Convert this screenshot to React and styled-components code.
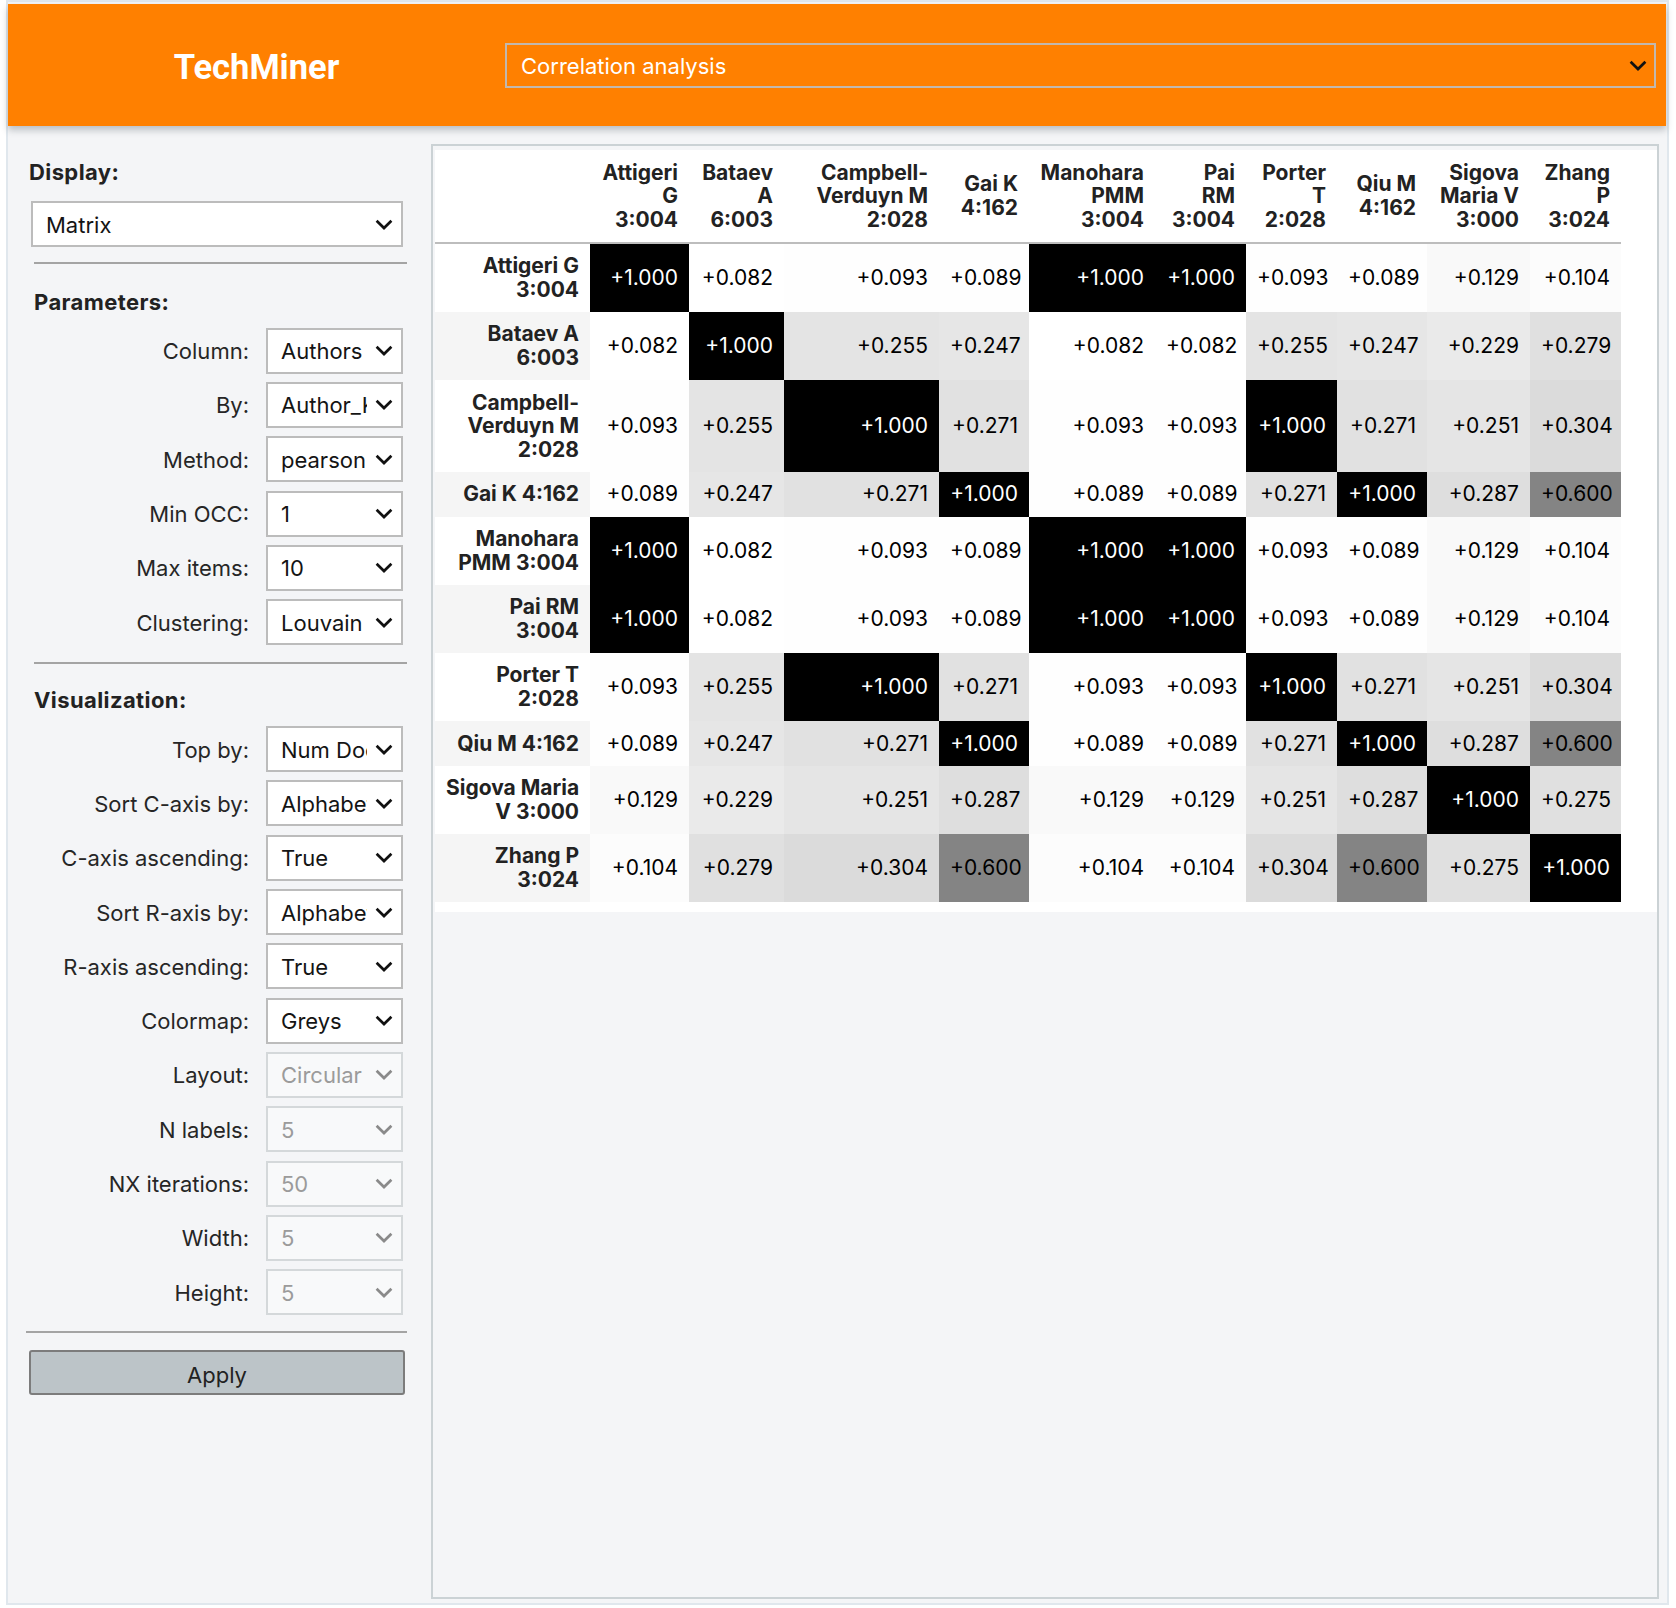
import React from "react";
import styled, { createGlobalStyle } from "styled-components";

const GlobalStyle = createGlobalStyle`
  html, body {
    margin: 0;
    padding: 0;
    background: #ffffff;
  }
  body {
    font-family: Inter, "Noto Sans", "Liberation Sans", sans-serif;
    color: #222;
  }
  * {
    box-sizing: border-box;
  }
`;

const authors = [
  { col: ["Attigeri", "G", "3:004"], row: ["Attigeri G", "3:004"], width: 99 },
  { col: ["Bataev", "A", "6:003"], row: ["Bataev A", "6:003"], width: 95 },
  { col: ["Campbell-", "Verduyn M", "2:028"], row: ["Campbell-", "Verduyn M", "2:028"], width: 155 },
  { col: ["Gai K", "4:162"], row: ["Gai K 4:162"], width: 90 },
  { col: ["Manohara", "PMM", "3:004"], row: ["Manohara", "PMM 3:004"], width: 126 },
  { col: ["Pai", "RM", "3:004"], row: ["Pai RM", "3:004"], width: 91 },
  { col: ["Porter", "T", "2:028"], row: ["Porter T", "2:028"], width: 91 },
  { col: ["Qiu M", "4:162"], row: ["Qiu M 4:162"], width: 90 },
  { col: ["Sigova", "Maria V", "3:000"], row: ["Sigova Maria", "V 3:000"], width: 103 },
  { col: ["Zhang", "P", "3:024"], row: ["Zhang P", "3:024"], width: 91 },
];

const matrix = [
  [1.0, 0.082, 0.093, 0.089, 1.0, 1.0, 0.093, 0.089, 0.129, 0.104],
  [0.082, 1.0, 0.255, 0.247, 0.082, 0.082, 0.255, 0.247, 0.229, 0.279],
  [0.093, 0.255, 1.0, 0.271, 0.093, 0.093, 1.0, 0.271, 0.251, 0.304],
  [0.089, 0.247, 0.271, 1.0, 0.089, 0.089, 0.271, 1.0, 0.287, 0.6],
  [1.0, 0.082, 0.093, 0.089, 1.0, 1.0, 0.093, 0.089, 0.129, 0.104],
  [1.0, 0.082, 0.093, 0.089, 1.0, 1.0, 0.093, 0.089, 0.129, 0.104],
  [0.093, 0.255, 1.0, 0.271, 0.093, 0.093, 1.0, 0.271, 0.251, 0.304],
  [0.089, 0.247, 0.271, 1.0, 0.089, 0.089, 0.271, 1.0, 0.287, 0.6],
  [0.129, 0.229, 0.251, 0.287, 0.129, 0.129, 0.251, 0.287, 1.0, 0.275],
  [0.104, 0.279, 0.304, 0.6, 0.104, 0.104, 0.304, 0.6, 0.275, 1.0],
];

const parameters = [
  ["Column:", "Authors"],
  ["By:", "Author_Keywords"],
  ["Method:", "pearson"],
  ["Min OCC:", "1"],
  ["Max items:", "10"],
  ["Clustering:", "Louvain"],
];

const visualization = [
  ["Top by:", "Num Documents"],
  ["Sort C-axis by:", "Alphabetic"],
  ["C-axis ascending:", "True"],
  ["Sort R-axis by:", "Alphabetic"],
  ["R-axis ascending:", "True"],
  ["Colormap:", "Greys"],
  ["Layout:", "Circular", true],
  ["N labels:", "5", true],
  ["NX iterations:", "50", true],
  ["Width:", "5", true],
  ["Height:", "5", true],
];

// matplotlib Greys, scaled over the whole table
const greys = [255, 240, 217, 189, 150, 115, 82, 37, 0];
function greyLevel(v) {
  const t = Math.min(1, Math.max(0, (v - 0.082) / (1 - 0.082)));
  const x = t * 8;
  const i = Math.min(7, Math.floor(x));
  const f = x - i;
  return Math.round(greys[i] + (greys[i + 1] - greys[i]) * f);
}

function Chevron({ color = "#111" }) {
  return (
    <ChevronIcon viewBox="0 0 18 11" fill="none">
      <path d="M1.6 1.8 L9 9 L16.4 1.8" stroke={color} strokeWidth="2.7" strokeLinejoin="miter" />
    </ChevronIcon>
  );
}

function Dropdown({ value, disabled }) {
  return (
    <SelectBox $disabled={disabled}>
      <SelectValue>{value}</SelectValue>
      <Chevron color={disabled ? "#8a8a8a" : "#111"} />
    </SelectBox>
  );
}

function Lines({ items }) {
  return items.map((t, i) => (
    <React.Fragment key={i}>
      {i > 0 && <br />}
      {t}
    </React.Fragment>
  ));
}

function App() {
  return (
    <>
      <GlobalStyle />
      <Frame>
        <Header>
          <Brand>TechMiner</Brand>
          <ModeSelect>
            <ModeValue>Correlation analysis</ModeValue>
            <Chevron color="#111" />
          </ModeSelect>
        </Header>
        <Body>
          <Sidebar>
            <SectionTitle $top={0} $left={0}>Display:</SectionTitle>
            <DisplayWrap>
              <Dropdown value="Matrix" />
            </DisplayWrap>
            <Rule />
            <SectionTitle>Parameters:</SectionTitle>
            <Rows>
              {parameters.map(([label, value]) => (
                <FieldRow key={label}>
                  <FieldLabel>{label}</FieldLabel>
                  <Dropdown value={value} />
                </FieldRow>
              ))}
            </Rows>
            <Rule $top={17} />
            <SectionTitle $top={23}>Visualization:</SectionTitle>
            <Rows>
              {visualization.map(([label, value, disabled]) => (
                <FieldRow key={label}>
                  <FieldLabel>{label}</FieldLabel>
                  <Dropdown value={value} disabled={disabled} />
                </FieldRow>
              ))}
            </Rows>
            <Rule $top={15.5} $left={-3} />
            <ApplyButton type="button">Apply</ApplyButton>
          </Sidebar>
          <Main>
            <Output>
              <Grid>
                <colgroup>
                  <col style={{ width: 155 }} />
                  {authors.map((a) => (
                    <col key={a.row.join()} style={{ width: a.width }} />
                  ))}
                </colgroup>
                <thead>
                  <tr>
                    <HeadCell />
                    {authors.map((a) => (
                      <HeadCell key={a.col.join()}>
                        <Lines items={a.col} />
                      </HeadCell>
                    ))}
                  </tr>
                </thead>
                <tbody>
                  {authors.map((a, r) => (
                    <tr key={a.row.join()}>
                      <RowHead $striped={r % 2 === 1}>
                        <Lines items={a.row} />
                      </RowHead>
                      {matrix[r].map((v, c) => {
                        const g = greyLevel(v);
                        return (
                          <ValueCell
                            key={c}
                            style={{
                              background: `rgb(${g},${g},${g})`,
                              color: g < 70 ? "#ffffff" : "#000000",
                            }}
                          >
                            +{v.toFixed(3)}
                          </ValueCell>
                        );
                      })}
                    </tr>
                  ))}
                </tbody>
              </Grid>
            </Output>
          </Main>
        </Body>
      </Frame>
    </>
  );
}

const Frame = styled.div`
  margin-left: 6px;
  width: 1663px;
  height: 1605px;
  border: 2px solid #e0e7ed;
  padding-top: 2px;
  background: #f4f5f7;
  display: flex;
  flex-direction: column;
`;

const Header = styled.header`
  position: relative;
  z-index: 1;
  flex-shrink: 0;
  height: 122px;
  margin-right: 1px;
  padding-right: 10px;
  background: #ff8000;
  display: flex;
  align-items: center;
  box-shadow: 0 4px 7px rgba(40, 50, 60, 0.28);
`;

const Brand = styled.div`
  width: 497px;
  flex-shrink: 0;
  text-align: center;
  font-family: Roboto, "Liberation Sans", sans-serif;
  font-weight: 700;
  font-size: 34.5px;
  color: #ffffff;
  padding-top: 3px;
`;

const ModeSelect = styled.div`
  flex: 1;
  height: 45px;
  border: 2px solid #c2b8ae;
  display: flex;
  align-items: center;
  padding: 0 7px 0 14px;
`;

const ModeValue = styled.span`
  flex: 1;
  color: #ffffff;
  font-size: 22px;
  padding-top: 2px;
`;

const ChevronIcon = styled.svg`
  width: 18px;
  height: 11px;
  flex-shrink: 0;
`;

const Body = styled.div`
  flex: 1;
  min-height: 0;
  display: flex;
`;

const Sidebar = styled.aside`
  width: 423px;
  flex-shrink: 0;
  padding: 33px 24px 0 21px;
  display: flex;
  flex-direction: column;
`;

const DisplayWrap = styled.div`
  margin: 16px 4px 0 2px;
`;

const SectionTitle = styled.div`
  margin: ${(p) => p.$top ?? 24.7}px 0 0 ${(p) => p.$left ?? 5}px;
  font-size: 22px;
  font-weight: 700;
  letter-spacing: 0.4px;
  line-height: 26px;
  color: #222;
`;

const Rule = styled.div`
  margin: ${(p) => p.$top ?? 15}px 0 0 ${(p) => p.$left ?? 5}px;
  height: 2px;
  background: #a4a4a4;
`;

const Rows = styled.div`
  margin-top: 13px;
  display: flex;
  flex-direction: column;
  gap: 8.3px;
`;

const FieldRow = styled.div`
  display: grid;
  grid-template-columns: 220px 137px;
  column-gap: 17px;
  align-items: center;
`;

const FieldLabel = styled.span`
  text-align: right;
  font-size: 22px;
  color: #262626;
  white-space: nowrap;
  padding-top: 1px;
`;

const SelectBox = styled.div`
  height: 46px;
  border: 2px solid ${(p) => (p.$disabled ? "#d4d8da" : "#bcbcbc")};
  background: ${(p) => (p.$disabled ? "#f8f9fa" : "#ffffff")};
  color: ${(p) => (p.$disabled ? "#9b9b9b" : "#141414")};
  display: flex;
  align-items: center;
  padding: 0 8px 0 13px;
  font-size: 22px;
`;

const SelectValue = styled.span`
  flex: 1;
  min-width: 0;
  margin-right: 8px;
  padding-top: 1px;
  overflow: hidden;
  white-space: nowrap;
`;

const ApplyButton = styled.button`
  margin-top: 17.5px;
  width: 376px;
  height: 45px;
  background: #bcc4c8;
  border: 2px solid #7c7c7c;
  border-radius: 3px;
  font-family: Inter, "Noto Sans", "Liberation Sans", sans-serif;
  font-size: 22px;
  color: #222;
  padding-top: 6px;
`;

const Main = styled.main`
  flex: 1;
  min-width: 0;
  margin: 18px 8px 4px 0;
  border: 2px solid #cbd2d5;
  padding: 4px 0 0 2px;
`;

const Output = styled.div`
  background: #ffffff;
  padding-bottom: 10px;
`;

const Grid = styled.table`
  border-collapse: collapse;
  border-spacing: 0;
  table-layout: fixed;
  width: 1186px;
  font-size: 21px;
  line-height: 23.6px;
`;

const HeadCell = styled.th`
  padding: 10.5px 11px;
  text-align: right;
  vertical-align: middle;
  font-weight: 700;
  color: #222;
  white-space: nowrap;
  border-bottom: 2px solid #bdbdbd;
`;

const RowHead = styled.th`
  padding: 10.5px 11px;
  text-align: right;
  vertical-align: middle;
  font-weight: 700;
  color: #222;
  white-space: nowrap;
  background: ${(p) => (p.$striped ? "#f5f5f5" : "#ffffff")};
`;

const ValueCell = styled.td`
  padding: 10.5px 11px;
  text-align: right;
  vertical-align: middle;
  white-space: nowrap;
`;

export default App;
